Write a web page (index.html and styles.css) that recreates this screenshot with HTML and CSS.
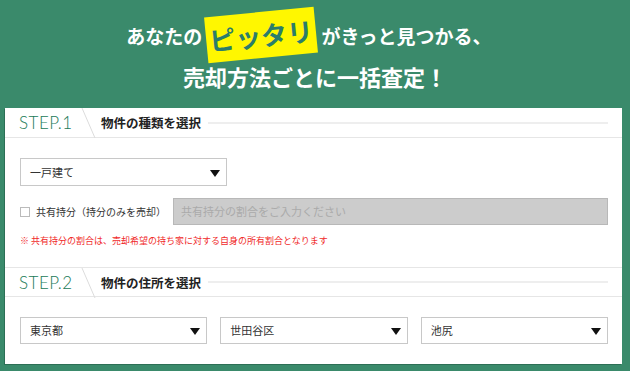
FILE: index.html
```html
<!DOCTYPE html>
<html lang="ja">
<head>
    <meta charset="UTF-8">
    <title>一括査定</title>
    <link rel="stylesheet" href="styles.css">
</head>
<body>
    <div class="hero">
        <div class="hero-line">
            <span>あなたの</span>
            <span class="pittari">ピッタリ</span>
            <span>がきっと見つかる、</span>
        </div>
        <div class="hero-sub">売却方法ごとに一括査定！</div>
    </div>

    <div class="card">
        <div class="step-head">
            <span class="step-num">STEP.1</span>
            <svg class="step-slash" width="16" height="30" viewBox="0 0 16 30"><line x1="1" y1="0" x2="14" y2="30" stroke="#dcdcdc" stroke-width="1"/></svg>
            <span class="step-title">物件の種類を選択</span>
            <span class="step-rule"></span>
        </div>
        <div class="step-body">
            <div class="select select-wide">一戸建て<span class="arrow"></span></div>
            <div class="share-row">
                <label class="share-label"><span class="checkbox"></span>共有持分（持分のみを売却）</label>
                <div class="share-input">共有持分の割合をご入力ください</div>
            </div>
            <p class="note">※ 共有持分の割合は、売却希望の持ち家に対する自身の所有割合となります</p>
        </div>

        <div class="step-head step-head-top">
            <span class="step-num">STEP.2</span>
            <svg class="step-slash" width="16" height="30" viewBox="0 0 16 30"><line x1="1" y1="0" x2="14" y2="30" stroke="#dcdcdc" stroke-width="1"/></svg>
            <span class="step-title">物件の住所を選択</span>
            <span class="step-rule"></span>
        </div>
        <div class="step-body address">
            <div class="select">東京都<span class="arrow"></span></div>
            <div class="select">世田谷区<span class="arrow"></span></div>
            <div class="select">池尻<span class="arrow"></span></div>
        </div>
    </div>
</body>
</html>
```

FILE: styles.css
```css
* {
  margin: 0;
  padding: 0;
  box-sizing: border-box;
}

body {
  font-family: "Noto Sans CJK JP", "Noto Sans", sans-serif;
  background-color: #3a8a6b;
  color: #333;
  width: 630px;
  height: 371px;
  overflow: hidden;
}

.hero {
  height: 108px;
  padding-top: 10px;
  color: #fff;
  font-weight: bold;
  text-align: center;
}

.hero-line {
  display: flex;
  justify-content: center;
  align-items: center;
  height: 50px;
  font-size: 19px;
  padding-right: 12px;
}

.pittari {
  display: inline-block;
  background-color: #fff700;
  color: #2b7d6b;
  font-size: 26px;
  line-height: 46px;
  width: 110px;
  margin: 0 5px 0 4px;
  transform: rotate(-5.5deg);
}

.hero-sub {
  font-size: 22px;
  line-height: 26px;
  margin-top: 3px;
}

.card {
  background-color: #fff;
  margin: 0 8px 0 5px;
  padding-bottom: 20px;
  box-shadow: -1px 1px 0 #2c6f55;
}

.step-head {
  display: flex;
  align-items: center;
  height: 30px;
  padding: 0 14px;
  border-bottom: 1px solid #e6e6e6;
}

.step-head-top {
  border-top: 1px solid #e6e6e6;
  height: 30px;
}

.step-num {
  font-family: "Lato", "Noto Sans", sans-serif;
  font-weight: 300;
  font-size: 17px;
  color: #217a58;
  letter-spacing: 0.5px;
  width: 62px;
}

.step-slash {
  display: block;
  align-self: flex-start;
  margin-right: 4px;
}

.step-title {
  font-size: 12.5px;
  font-weight: bold;
  color: #222;
  margin-right: 7px;
}

.step-rule {
  flex: 1;
  height: 2px;
  background-color: #eee;
}

.step-body {
  padding: 20px 14px 0 15px;
}

.select {
  position: relative;
  height: 28px;
  line-height: 26px;
  border: 1px solid #c8c8c8;
  padding-left: 9px;
  font-size: 11px;
  color: #333;
}

.select-wide {
  width: 207px;
}

.arrow {
  position: absolute;
  right: 6px;
  top: 11px;
  width: 0;
  height: 0;
  border-left: 5px solid transparent;
  border-right: 5px solid transparent;
  border-top: 7px solid #111;
}

.share-row {
  display: flex;
  align-items: center;
  margin-top: 12px;
}

.share-label {
  display: flex;
  align-items: center;
  width: 153px;
  font-size: 10px;
  color: #333;
}

.checkbox {
  width: 10px;
  height: 10px;
  border: 1px solid #bbb;
  margin-right: 6px;
}

.share-input {
  flex: 1;
  height: 27px;
  line-height: 25px;
  background-color: #ccc;
  border: 1px solid #b8b8b8;
  padding-left: 7px;
  font-size: 11px;
  color: #aaa;
}

.note {
  font-size: 9px;
  color: #f02a2a;
  margin-top: 10px;
  margin-bottom: 20px;
  line-height: 12px;
}

.address {
  display: grid;
  grid-template-columns: repeat(3, 1fr);
  gap: 13px;
}

.address .select {
  height: 27px;
  line-height: 25px;
}

.address .arrow {
  top: 10px;
}
```
